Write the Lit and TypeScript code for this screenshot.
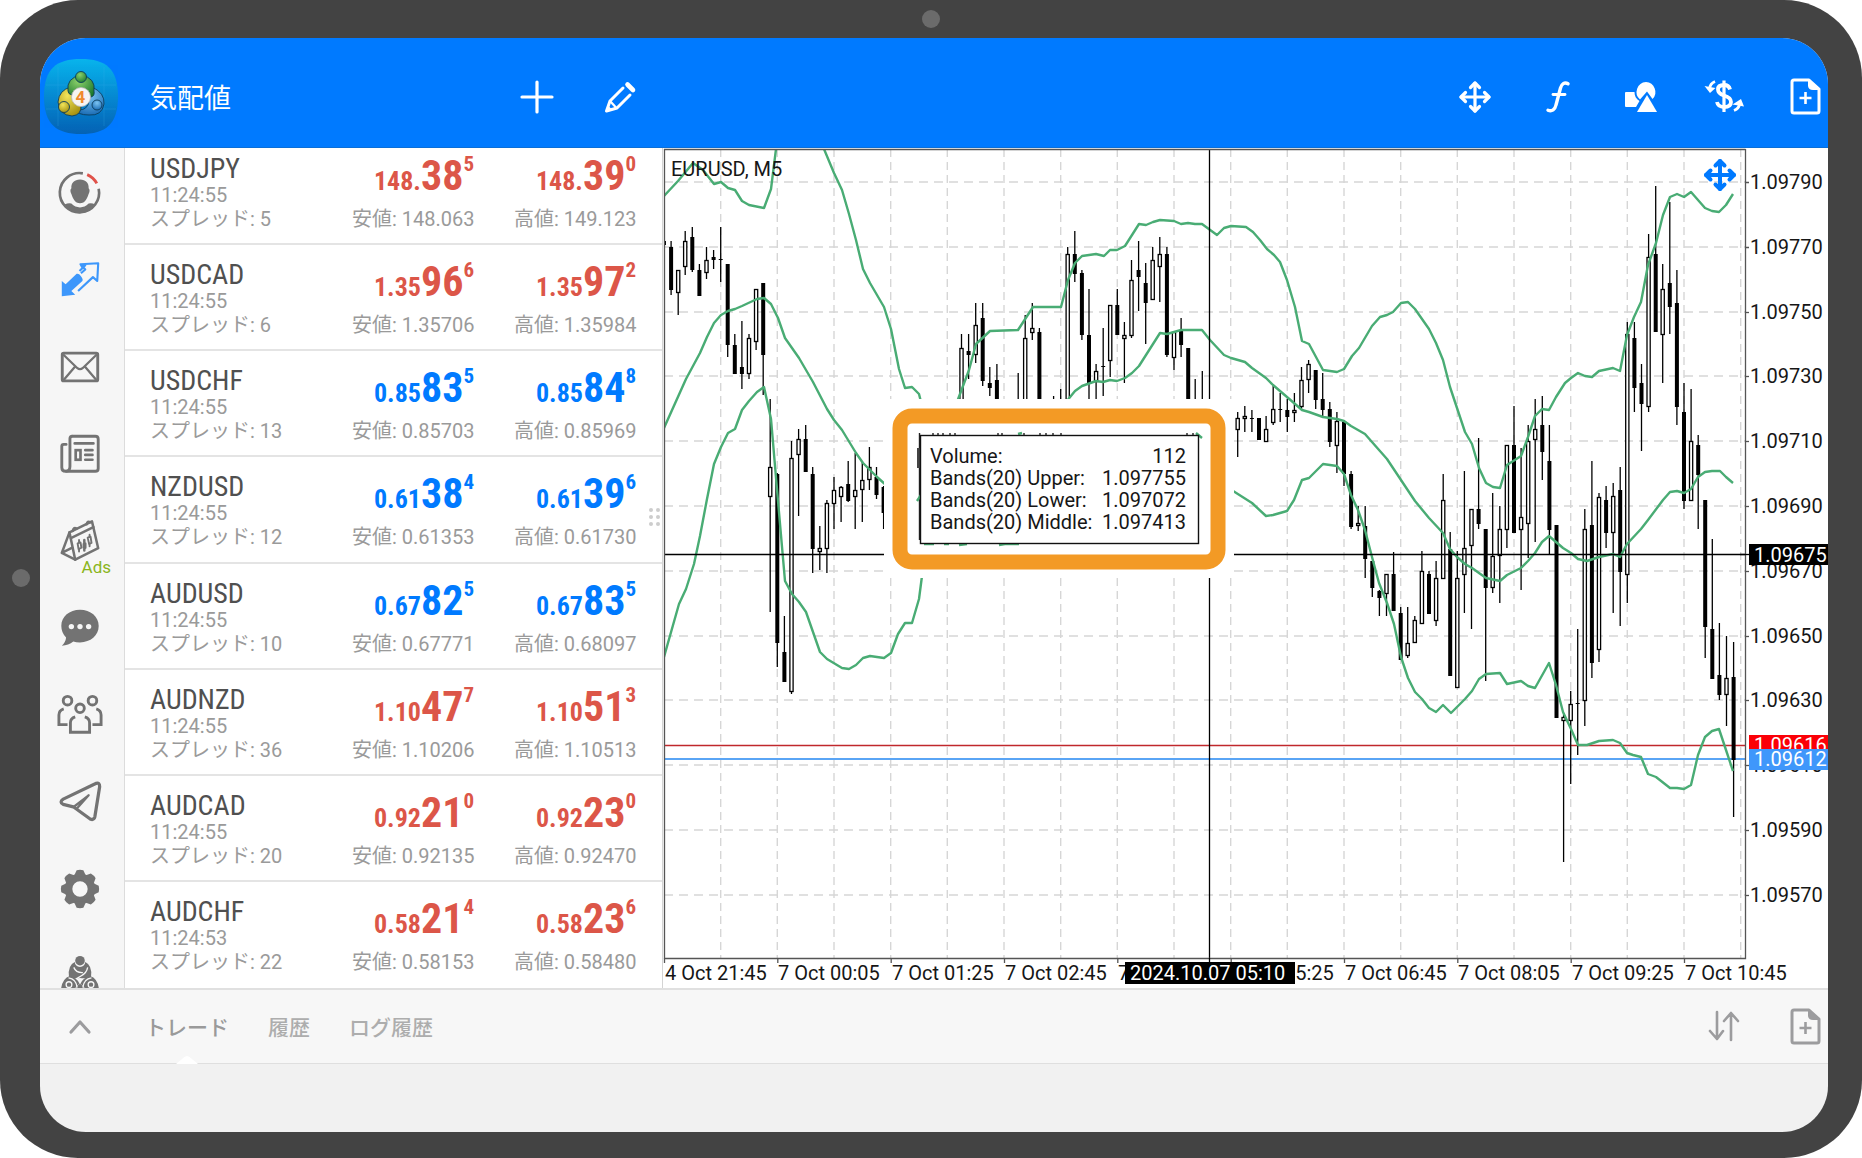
import { LitElement, html, svg, css } from "lit";
import { customElement, property } from "lit/decorators.js";

interface Quote {
  symbol: string;
  time: string;
  spread: number;
  bid: [string, string, string];
  ask: [string, string, string];
  low: string;
  high: string;
  up: boolean;
}

const QUOTES: Quote[] = [
  { symbol: "USDJPY", time: "11:24:55", spread: 5, bid: ["148.", "38", "5"], ask: ["148.", "39", "0"], low: "148.063", high: "149.123", up: false },
  { symbol: "USDCAD", time: "11:24:55", spread: 6, bid: ["1.35", "96", "6"], ask: ["1.35", "97", "2"], low: "1.35706", high: "1.35984", up: false },
  { symbol: "USDCHF", time: "11:24:55", spread: 13, bid: ["0.85", "83", "5"], ask: ["0.85", "84", "8"], low: "0.85703", high: "0.85969", up: true },
  { symbol: "NZDUSD", time: "11:24:55", spread: 12, bid: ["0.61", "38", "4"], ask: ["0.61", "39", "6"], low: "0.61353", high: "0.61730", up: true },
  { symbol: "AUDUSD", time: "11:24:55", spread: 10, bid: ["0.67", "82", "5"], ask: ["0.67", "83", "5"], low: "0.67771", high: "0.68097", up: true },
  { symbol: "AUDNZD", time: "11:24:55", spread: 36, bid: ["1.10", "47", "7"], ask: ["1.10", "51", "3"], low: "1.10206", high: "1.10513", up: false },
  { symbol: "AUDCAD", time: "11:24:55", spread: 20, bid: ["0.92", "21", "0"], ask: ["0.92", "23", "0"], low: "0.92135", high: "0.92470", up: false },
  { symbol: "AUDCHF", time: "11:24:53", spread: 22, bid: ["0.58", "21", "4"], ask: ["0.58", "23", "6"], low: "0.58153", high: "0.58480", up: false },
];

// Each candle: bar index, high, body top, body bottom, low, 1 = bearish (solid).
type Candle = [number, number, number, number, number, number];
const CANDLES: Candle[] = [
  [0, 225, 241, 245, 257, 1], [1, 241, 247, 290, 295, 1], [2, 270, 270, 293, 315, 0], [3, 231, 241, 267, 275, 0],
  [4, 227, 237, 270, 272, 1], [5, 264, 270, 296, 296, 1], [6, 247, 260, 273, 279, 0], [7, 250, 257, 260, 269, 1],
  [8, 227, 259, 260, 282, 1], [9, 264, 264, 345, 357, 1], [10, 334, 345, 374, 374, 1], [11, 321, 367, 374, 389, 1],
  [12, 334, 338, 374, 379, 0], [13, 289, 289, 342, 350, 0], [14, 283, 283, 355, 395, 1], [15, 399, 467, 497, 612, 0],
  [16, 473, 474, 643, 667, 1], [17, 616, 652, 682, 682, 1], [18, 441, 458, 692, 694, 0], [19, 429, 439, 455, 516, 0],
  [20, 425, 439, 472, 472, 1], [21, 467, 474, 549, 573, 1], [22, 526, 548, 552, 570, 0], [23, 500, 503, 549, 573, 0],
  [24, 477, 490, 504, 529, 0], [25, 486, 487, 497, 522, 0], [26, 461, 484, 501, 502, 1], [27, 453, 490, 497, 529, 0],
  [28, 462, 480, 490, 522, 0], [29, 447, 467, 480, 490, 0], [30, 467, 477, 495, 499, 1], [31, 486, 487, 513, 529, 1],
  [42, 334, 348, 410, 410, 0], [43, 334, 351, 355, 379, 1], [44, 303, 325, 355, 363, 0], [45, 303, 318, 381, 386, 1],
  [46, 367, 383, 388, 396, 1], [47, 364, 380, 410, 410, 1], [50, 373, 405, 410, 410, 1], [51, 315, 338, 410, 410, 0],
  [52, 303, 328, 333, 340, 0], [53, 328, 332, 410, 410, 1], [55, 396, 405, 410, 410, 1], [56, 389, 405, 410, 410, 1],
  [57, 247, 254, 410, 410, 0], [58, 231, 254, 274, 282, 1], [59, 270, 273, 335, 340, 1], [60, 289, 335, 383, 410, 1],
  [61, 364, 371, 382, 410, 0], [62, 328, 366, 367, 396, 1], [63, 305, 305, 361, 377, 0], [64, 289, 305, 335, 335, 1],
  [65, 322, 335, 339, 383, 0], [66, 260, 280, 336, 338, 0], [67, 241, 270, 277, 311, 1], [68, 263, 283, 303, 344, 1],
  [69, 247, 260, 300, 300, 0], [70, 237, 254, 267, 302, 0], [71, 247, 254, 355, 357, 1], [72, 332, 332, 358, 370, 0],
  [73, 318, 330, 345, 357, 1], [74, 348, 348, 410, 410, 1], [75, 379, 405, 410, 410, 1], [76, 371, 405, 410, 410, 1],
  [81, 412, 418, 430, 457, 0], [82, 406, 416, 419, 432, 0], [83, 410, 418, 419, 432, 1], [84, 418, 418, 440, 440, 1],
  [85, 416, 429, 442, 442, 0], [86, 386, 409, 423, 425, 0], [87, 393, 409, 410, 422, 1], [88, 399, 410, 417, 432, 1],
  [89, 393, 410, 413, 422, 0], [90, 367, 380, 407, 409, 0], [91, 360, 364, 380, 393, 0], [92, 370, 370, 400, 409, 1],
  [93, 373, 399, 410, 417, 1], [94, 402, 409, 442, 447, 1], [95, 412, 421, 446, 473, 0], [96, 421, 422, 474, 486, 1],
  [97, 471, 474, 527, 529, 1], [98, 506, 523, 526, 531, 0], [99, 506, 526, 559, 578, 1], [100, 561, 561, 588, 597, 1],
  [101, 590, 591, 598, 616, 1], [102, 574, 574, 594, 616, 0], [103, 552, 574, 611, 611, 1], [104, 607, 613, 660, 660, 1],
  [105, 607, 643, 656, 658, 0], [106, 616, 620, 643, 643, 0], [107, 551, 571, 624, 624, 0], [108, 571, 574, 614, 614, 1],
  [109, 561, 578, 621, 626, 0], [110, 474, 500, 579, 579, 0], [111, 532, 549, 676, 676, 1], [112, 551, 578, 688, 688, 0],
  [113, 471, 548, 575, 613, 0], [114, 509, 509, 546, 629, 0], [115, 438, 509, 524, 529, 1], [116, 529, 529, 588, 681, 1],
  [117, 493, 556, 588, 593, 0], [118, 506, 529, 556, 603, 0], [119, 445, 445, 530, 548, 0], [120, 406, 445, 533, 533, 1],
  [121, 448, 517, 530, 590, 0], [122, 425, 441, 524, 558, 0], [123, 399, 429, 440, 542, 0], [124, 396, 425, 452, 480, 1],
  [125, 425, 461, 530, 554, 1], [126, 525, 525, 718, 718, 1], [127, 713, 717, 721, 862, 0], [128, 691, 704, 721, 784, 0],
  [129, 629, 703, 704, 755, 1], [130, 509, 529, 701, 726, 0], [131, 461, 525, 663, 678, 1], [132, 493, 497, 650, 662, 0],
  [133, 486, 500, 533, 548, 1], [134, 483, 496, 533, 613, 0], [135, 467, 490, 572, 626, 1], [136, 322, 334, 575, 603, 0],
  [137, 322, 338, 388, 412, 1], [138, 364, 383, 404, 451, 1], [139, 234, 257, 407, 412, 0], [140, 186, 254, 332, 332, 1],
  [141, 264, 289, 335, 383, 0], [142, 202, 283, 307, 334, 1], [143, 270, 303, 407, 425, 1], [144, 383, 412, 501, 509, 1],
  [145, 389, 441, 501, 501, 0], [146, 435, 445, 475, 529, 1], [147, 500, 500, 627, 658, 1], [148, 539, 629, 679, 679, 1],
  [149, 623, 675, 695, 700, 1], [150, 636, 678, 695, 726, 0], [151, 642, 677, 760, 817, 1],
];

const BANDS: string[] = [
  // upper
  "664,196 678,181 693,163 703,170 714,184 721,182 728,188 735,190 742,201 749,205 764,208 771,189 776,149",
  "824,149 834,173 842,190 849,214 856,240 863,269 870,283 877,295 884,307 891,329 899,369 905,388 912,387 919,394 921,402",
  "957,402 969,370 976,344 990,331 1018,330 1033,307 1061,307 1068,280 1075,263 1082,256 1096,254 1104,256 1110,250 1117,250 1125,246 1139,224 1146,225 1153,222 1160,220 1174,221 1181,224 1188,223 1195,224 1202,224 1217,235 1224,228 1231,226 1246,227 1253,232 1260,240 1267,249 1274,255 1280,262 1287,280 1295,307 1302,341 1309,344 1323,370 1337,372 1344,369 1352,356 1359,348 1372,326 1380,317 1387,315 1393,312 1401,303 1408,302 1415,309 1429,329 1436,343 1443,360 1450,387 1465,432 1472,444 1479,468 1486,483 1493,487 1500,488 1507,465 1521,456 1528,437 1535,416 1542,409 1549,410 1556,397 1565,383 1571,378 1578,373 1585,376 1592,377 1599,371 1613,368 1620,371 1627,335 1634,317 1641,302 1648,265 1656,243 1663,215 1670,197 1677,194 1684,197 1691,192 1705,208 1712,211 1719,212 1726,205 1733,194",
  // middle
  "664,428 686,379 700,353 707,337 714,323 721,315 728,311 735,309 742,306 757,299 764,298 771,304 778,318 785,338 799,358 813,382 827,409 834,420 842,430 856,453 863,463 870,470 877,477 886,485",
  "1066,402 1075,391 1082,386 1096,381 1103,382 1110,380 1117,381 1125,378 1132,373 1139,366 1153,344 1160,333 1167,334 1181,330 1202,330 1210,340 1224,355 1231,358 1245,362 1252,368 1266,378 1273,385 1287,397 1302,410 1309,412 1323,417 1337,419 1344,421 1351,426 1365,434 1372,442 1387,459 1415,501 1429,518 1443,533 1450,549 1457,557 1465,564 1472,568 1486,578 1500,581 1507,575 1521,568 1528,561 1535,553 1542,542 1549,536 1563,548 1571,553 1578,559 1587,561 1599,557 1613,554 1620,557 1627,544 1641,529 1648,520 1663,500 1670,492 1677,491 1684,493 1691,489 1698,477 1705,472 1712,471 1720,471 1726,477 1733,483",
  // lower
  "664,657 679,604 686,589 694,564 700,536 707,499 714,464 721,447 728,433 735,429 742,410 749,401 757,392 764,387 771,419 778,501 785,581 792,594 799,602 806,612 820,652 827,659 842,668 849,669 856,665 863,658 870,656 884,658 891,653 898,634 905,623 912,623 919,599 922,576",
  "1230,489 1252,503 1266,516 1273,515 1280,513 1287,511 1294,500 1302,480 1309,478 1323,464 1337,466 1344,474 1351,495 1358,510 1365,530 1372,557 1379,583 1387,603 1394,624 1401,657 1408,678 1415,692 1422,699 1429,708 1436,712 1443,705 1451,713 1457,707 1465,699 1472,691 1479,679 1486,674 1500,673 1507,684 1521,681 1528,686 1535,688 1549,663 1556,685 1563,712 1571,729 1578,745 1587,745 1599,741 1613,740 1620,743 1627,753 1633,755 1641,757 1648,774 1656,777 1670,788 1677,788 1684,789 1691,785 1698,755 1705,737 1712,731 1719,729 1726,750 1733,771",
];

const PRICES = ["1.09790", "1.09770", "1.09750", "1.09730", "1.09710", "1.09690", "1.09670", "1.09650", "1.09630", "1.09610", "1.09590", "1.09570"];
const TIMES = ["4 Oct 21:45", "7 Oct 00:05", "7 Oct 01:25", "7 Oct 02:45", "7 Oct 04:05", "7 Oct 05:25", "7 Oct 06:45", "7 Oct 08:05", "7 Oct 09:25", "7 Oct 10:45"];

const READOUT: [string, string][] = [
  ["Volume:", "112"],
  ["Bands(20) Upper:", "1.097755"],
  ["Bands(20) Lower:", "1.097072"],
  ["Bands(20) Middle:", "1.097413"],
];

const barX = (i: number) => Math.round((664 + i * 7.0833) * 10) / 10;
const gridY = (i: number) => Math.round(182 + i * 64.8);

const moveIcon = (width: number) => svg`
  <g fill="none" stroke="currentColor" stroke-width=${width} stroke-linecap="round" stroke-linejoin="round">
    <path d="M16 2V30M2 16H30"/>
    <path d="M11.500 6.500L16 2L20.500 6.500M11.500 25.500L16 30L20.500 25.500M6.500 11.500L2 16L6.500 20.500M25.500 11.500L30 16L25.500 20.500"/>
  </g>`;

const docIcon = svg`
  <path d="M5 1H20L30 10V32Q30 34 28 34H5Q3 34 3 32V3Q3 1 5 1Z" fill="none" stroke="currentColor" stroke-width="3" stroke-linejoin="round"/>
  <path d="M19 1L31 11H24Q19.500 11 19 7Z" fill="currentColor"/>
  <path d="M16.500 13V25M10.500 19H22.500" stroke="currentColor" stroke-width="2.600"/>`;

const ICONS = {
  plus: svg`<path d="M16 1V31M1 16H31" stroke="currentColor" stroke-width="3.200" stroke-linecap="round"/>`,
  pencil: svg`
    <path d="M19 7L6 20L2.500 30L13 27L26 14" fill="none" stroke="currentColor" stroke-width="3" stroke-linejoin="round" stroke-linecap="round"/>
    <path d="M6 20L12.500 27" stroke="currentColor" stroke-width="2.200"/>
    <path d="M2 31L4 24.500L8.500 29Z" fill="currentColor"/>
    <path d="M23.500 3.500L29 9" stroke="currentColor" stroke-width="4.600" stroke-linecap="round"/>`,
  move: moveIcon(3.2),
  func: svg`
    <path d="M26 2.800C22.500 0.800 19.500 3 18.500 7L14 24C13 28.500 10 31 6 29.200" fill="none" stroke="currentColor" stroke-width="3.400" stroke-linecap="round"/>
    <path d="M11 13.500H23" stroke="currentColor" stroke-width="2.800" stroke-linecap="round"/>`,
  shapes: svg`
    <path d="M1 11H9.500C9.500 15 11 18 14.500 20L11 26H1Q0 26 0 25V12Q0 11 1 11Z" fill="currentColor"/>
    <path d="M21 1A10 10 0 0 1 27.500 18L22 10.500L15 18.500A10 10 0 0 1 21 1Z" fill="currentColor"/>
    <path d="M22 14L32 31H12Z" fill="currentColor"/>`,
  dollar: svg`
    <path d="M24 10.500Q23 6 18 6Q12 6 12 10.500Q12 14.500 18 16.500Q25 18.500 25 23Q25 28 18 28Q12 28 11 23" fill="none" stroke="currentColor" stroke-width="3.800"/>
    <path d="M18 1.500V33" stroke="currentColor" stroke-width="3.200"/>
    <path d="M9 2.500Q4 4.500 3.500 10" fill="none" stroke="currentColor" stroke-width="2.800"/>
    <path d="M-1.500 7L9.500 9L4 14Z" fill="currentColor"/>
    <path d="M28 31.500Q33 29.500 33.500 25" fill="none" stroke="currentColor" stroke-width="2.800"/>
    <path d="M26.500 25.500L35 20L38 27.500Z" fill="currentColor"/>`,
  doc: docIcon,
  sort: svg`
    <path d="M10 2V29M3 21L10 29L16 21M24 30V3M17 11L24 3L31 11" fill="none" stroke="currentColor" stroke-width="2.600" stroke-linecap="round" stroke-linejoin="round"/>`,
  up: svg`<path d="M7 21L16 11L25 21" fill="none" stroke="currentColor" stroke-width="3.200" stroke-linecap="round" stroke-linejoin="round"/>`,

  account: svg`
    <path d="M27 3.500A20.500 20.500 0 1 0 43.500 19.500" fill="none" stroke="currentColor" stroke-width="2.800"/>
    <path d="M31.500 4.800A20.500 20.500 0 0 1 41.500 14" fill="none" stroke="#e0524a" stroke-width="3"/>
    <path d="M24 10C30 10 33.500 14 33 19Q35 21 33 25Q31 31.500 27.500 34Q24 35.500 20.500 34Q17 31.500 15 25Q13 21 15 19C14.500 14 18 10 24 10Z" fill="currentColor"/>
    <path d="M8 36Q12 34 15 35Q19 39 24 39Q29 39 33 35Q36 34 40 36Q34 45 24 45Q14 45 8 36Z" fill="currentColor"/>`,
  trade: svg`
    <path d="M5 25L9 28.500L20.500 17.500Q23 17 25 20Q27.500 23 26.500 25L15 35.500L19 39.500L5 41Z" fill="currentColor"/>
    <path d="M23.500 14.500L29.500 8.500L26 10L24.500 7.500L43 6.500L42 25L37.500 21L22 35.500M24.500 7.500L29.500 13L25 17" fill="none" stroke="currentColor" stroke-width="2.200" stroke-linejoin="round"/>`,
  mail: svg`
    <rect x="5.500" y="9.500" width="37" height="29" rx="1.500" fill="none" stroke="currentColor" stroke-width="3"/>
    <path d="M6.500 11L21 25Q24 27.500 27 25L41.500 11M6.500 38L18.500 24M41.500 38L29.500 24" fill="none" stroke="currentColor" stroke-width="2.400"/>`,
  news: svg`
    <path d="M16 5.500H40Q43 5.500 43 8.500V39Q43 42 40 42H9Q5 42 5 38V16Q5 14 7 14H9.500" fill="none" stroke="currentColor" stroke-width="3" stroke-linecap="round"/>
    <path d="M16 5.500Q13.500 5.500 13.500 8V37Q13.500 42 9 42" fill="none" stroke="currentColor" stroke-width="3"/>
    <path d="M18.500 13H38M29.500 20H37M29.500 25H37M29.500 30H37" stroke="currentColor" stroke-width="2.800" stroke-linecap="round"/>
    <rect x="19.500" y="20" width="5" height="10" fill="none" stroke="currentColor" stroke-width="2.800"/>`,
  calendar: svg`
    <g fill="none" stroke="currentColor" stroke-width="2.600" stroke-linejoin="round" stroke-linecap="round">
      <path d="M13 15L36.500 3.500L43 31.500L19 43.500L13 15Z"/>
      <path d="M13 15L5 36.500L19 43.500M14.500 21L38 9.500M5 36.500L16 31"/>
      <path d="M16.500 13.500Q17 9 20.500 11M31 6.500Q31.500 2.500 35 4.500"/>
      <path d="M23 23V35M34 17.500V29.500" stroke-width="2"/>
      <path d="M21.500 26.500L24.500 25.500L25.500 31L22.500 32.500ZM32 20.500L35 19.500L36 26L33.500 27Z" fill="#f6f6f6" stroke-width="2"/>
      <path d="M28.500 23V34M28 27V31M29.500 26.500V31"/>
    </g>`,
  chat: svg`
    <path d="M24 5C35 5 43.500 12 43.500 22C43.500 32 35 39 24 39Q20 39 17 38Q12 42 5 42.500Q9 39 9.500 34Q4.500 29 4.500 22C4.500 12 13 5 24 5Z" fill="currentColor"/>
    <g fill="#f6f6f6"><circle cx="15" cy="22.500" r="2.800"/><circle cx="24" cy="22.500" r="2.800"/><circle cx="33" cy="22.500" r="2.800"/></g>`,
  community: svg`
    <g fill="none" stroke="currentColor" stroke-width="3">
      <circle cx="11" cy="9" r="4.500"/><circle cx="37" cy="9" r="4.500"/><circle cx="24" cy="17" r="4.500"/>
      <path d="M7 17.500Q2 19 2 24V34H11M41 17.500Q46 19 46 24V34H37"/>
      <path d="M19 26Q14 27.500 14 32V42H34V32Q34 27.500 29 26"/>
    </g>`,
  telegram: svg`
    <path d="M41 4.500L6.500 21Q2 24 6.500 26.500L17 29L35 42Q38.500 43 39.500 39.500L44.500 8Q44.500 3.500 41 4.500Z" fill="none" stroke="currentColor" stroke-width="3.400" stroke-linejoin="round"/>
    <path d="M17 29.500L33 17L20.500 31" fill="none" stroke="currentColor" stroke-width="2.400" stroke-linejoin="round"/>`,
  gear: svg`
    <circle cx="24" cy="24" r="12" fill="none" stroke="currentColor" stroke-width="8"/>
    <g fill="currentColor">
      ${[0, 45, 90, 135, 180, 225, 270, 315].map((a) => svg`<path d="M17.500 11L20.500 4.500Q24 3.500 27.500 4.500L30.500 11Z" transform="rotate(${a} 24 24)"/>`)}
    </g>`,
  strategy: svg`
    <g fill="currentColor">
      <circle cx="24" cy="8" r="5"/>
      <path d="M12.500 25Q11 13 18.500 9.500Q19 14.500 24 14.500Q29 14.500 29.500 9.500Q37 13 35.500 25Q30 27 24 26Q18 27 12.500 25Z"/>
      <path d="M4 42Q4 27 13.500 24Q21 26 23.500 32Q18 35 18 42ZM44 42Q44 27 34.500 24Q27 26 24.500 32Q30 35 30 42Z"/>
      <path d="M19 42Q20 33 24 32Q28 33 29 42Z"/>
    </g>
    <g fill="none" stroke="#f6f6f6" stroke-width="1.400">
      <path d="M17.500 15Q20 21 27 20.500M32 15Q31 21 25 24L20 27M12 26Q20 27 21 36M36 26Q28 27 27 36"/>
      <circle cx="12.500" cy="33" r="3"/><circle cx="35.500" cy="33" r="3"/>
    </g>`,
};

const NAV: { icon: keyof typeof ICONS; label: string; active?: boolean; badge?: string }[] = [
  { icon: "account", label: "口座" },
  { icon: "trade", label: "トレード", active: true },
  { icon: "mail", label: "メール" },
  { icon: "news", label: "ニュース" },
  { icon: "calendar", label: "カレンダー", badge: "Ads" },
  { icon: "chat", label: "チャット" },
  { icon: "community", label: "コミュニティ" },
  { icon: "telegram", label: "Telegram" },
  { icon: "gear", label: "設定" },
  { icon: "strategy", label: "MQL5" },
];

@customElement("quote-row")
export class QuoteRow extends LitElement {
  @property({ attribute: false }) quote!: Quote;

  static styles = css`
    :host {
      display: grid;
      grid-template-columns: 1fr 122px 122px;
      column-gap: 40px;
      box-sizing: border-box;
      min-height: 106px;
      padding: 16px 26px 0 25px;
      border-bottom: 2px solid #e4e4e4;
      font-size: 20px;
      line-height: 24px;
      color: #9a9a9a;
      white-space: nowrap;
    }
    :host(:last-of-type) {
      border-bottom: 0;
    }
    .symbol {
      font-family: "Roboto Condensed", "Liberation Sans Narrow", Roboto, sans-serif;
      font-size: 28px;
      line-height: 28px;
      color: #505050;
    }
    .side {
      text-align: right;
    }
    .price {
      display: flex;
      justify-content: flex-end;
      align-items: baseline;
      height: 52px;
      font-family: "Roboto Condensed", "Liberation Sans Narrow", Roboto, sans-serif;
      font-weight: 700;
      font-size: 26px;
      line-height: 42px;
      color: #dc5648;
    }
    .price.up {
      color: #007aff;
    }
    .big {
      font-size: 42px;
    }
    .pip {
      align-self: flex-start;
      font-size: 21px;
      line-height: 18px;
    }
  `;

  private price([a, b, c]: [string, string, string]) {
    return html`<div class="price ${this.quote.up ? "up" : ""}"><span>${a}</span><span class="big">${b}</span><span class="pip">${c}</span></div>`;
  }

  render() {
    const q = this.quote;
    return html`
      <div>
        <div class="symbol">${q.symbol}</div>
        <div>${q.time}</div>
        <div>スプレッド: ${q.spread}</div>
      </div>
      <div class="side">${this.price(q.bid)}<div>安値: ${q.low}</div></div>
      <div class="side">${this.price(q.ask)}<div>高値: ${q.high}</div></div>
    `;
  }
}

@customElement("price-chart")
export class PriceChart extends LitElement {
  static styles = css`
    :host {
      display: block;
      background: #fff;
    }
    .chart {
      display: block;
      width: 100%;
      height: auto;
      font-family: Roboto, sans-serif;
      font-size: 20px;
      fill: #161616;
    }
    .grid {
      stroke: #d6d6d6;
      stroke-width: 1.4;
      fill: none;
    }
    .band {
      fill: none;
      stroke: #49ac74;
      stroke-width: 2.4;
      stroke-linejoin: round;
    }
    .wick {
      stroke: #000;
      stroke-width: 1.3;
    }
    .bull {
      fill: #fff;
      stroke: #000;
      stroke-width: 1.3;
    }
    .bear {
      fill: #000;
    }
    .frame {
      fill: none;
      stroke: #555;
      stroke-width: 1.3;
    }
    .cross {
      stroke: #000;
      stroke-width: 1.3;
    }
    .tag {
      fill: #fff;
    }
    .move {
      color: #007aff;
    }
  `;

  private candle([i, hi, top, bottom, lo, solid]: Candle) {
    const x = barX(i);
    return svg`
      <path class="wick" d="M${x} ${hi}V${lo}"/>
      ${solid
        ? svg`<rect class="bear" x=${x - 2} y=${top} width="4" height=${bottom - top}/>`
        : svg`<rect class="bull" x=${x - 1.6} y=${top + 0.5} width="3.2" height=${Math.max(bottom - top - 1, 1)}/>`}`;
  }

  render() {
    return html`
      <svg class="chart" viewBox="663 148 1165 840" role="img" aria-label="EURUSD, M5">
        <defs><clipPath id="plot"><rect x="664" y="149" width="1082" height="810"/></clipPath></defs>
        ${Array.from({ length: 19 }, (_, k) => svg`<path class="grid" stroke-dasharray="8 5" d="M${barX(8 + k * 8)} 149V958"/>`)}
        ${PRICES.map((_, k) => svg`<path class="grid" stroke-dasharray="9 6" d="M664 ${gridY(k)}H1745"/>`)}
        <g clip-path="url(#plot)">
          <path d="M664 745.500H1745" stroke="#c0282c" stroke-width="1.500"/>
          <path d="M664 759H1745" stroke="#5aa5f5" stroke-width="1.800"/>
          ${CANDLES.map((c) => this.candle(c))}
          ${BANDS.map((points) => svg`<polyline class="band" points=${points}/>`)}
          <path class="cross" d="M664 554.500H1745M1209.500 149V959"/>
        </g>
        <path class="frame" d="M664.500 958.500V149.500H1745.500M1745.500 149V958.500H664"/>
        <text x="671" y="176">EURUSD, M5</text>
        <g class="move" transform="translate(1704 159)">${moveIcon(4)}</g>

        <g>
          <rect x="884" y="399" width="350" height="179" fill="#fff"/>
          <rect x="900" y="416" width="318" height="146" rx="12" fill="#fff" stroke="#f39a25" stroke-width="15"/>
          <path d="M919.500 433V540M933 433V437M938 433V437M943 433V437M950 433V437M955 433V437M998 433V437M1002 433V437M1024 433V437M1040 433V437M1046 433V437M1053 433V437M1061 433V437M1187 433V437M1193 433V437M1197 433V437" stroke="#222" stroke-width="1.400"/>
          <rect x="917" y="448" width="3" height="20" fill="#444"/>
          <path class="band" d="M917 501L921 495M1018 434L1022 433M1196 433L1202 438M924 544H934M944 544H949M959 545L967 544M999 545L1005 544H1019"/>
          <rect x="920.500" y="435.500" width="278" height="108" fill="#fff" stroke="#111" stroke-width="1.400"/>
          ${READOUT.map(([label, value], k) => svg`
            <text x="930" y=${463 + k * 22}>${label}</text>
            <text x="1186" y=${463 + k * 22} text-anchor="end">${value}</text>`)}
        </g>

        ${PRICES.map((p, k) => svg`
          <path class="frame" d="M1745 ${gridY(k) + 0.5}H1749"/>
          <text x="1750" y=${gridY(k) + 7}>${p}</text>`)}
        <rect x="1749" y="544" width="79" height="21" fill="#000"/>
        <text class="tag" x="1754" y="562">1.09675</text>
        <path class="cross" d="M1740 554.500H1751"/>
        <rect x="1749" y="735" width="79" height="21" fill="#fb0007"/>
        <text class="tag" x="1754" y="752">1.09616</text>
        <rect x="1749" y="749" width="79" height="21" fill="#3f97fb"/>
        <text class="tag" x="1754" y="766">1.09612</text>

        ${TIMES.map((t, k) => svg`
          <path class="frame" d="M${barX(k * 16) + 0.5} 958V963"/>
          <text x=${Math.round(barX(k * 16)) + 1} y="980">${t}</text>`)}
        <rect x="1125" y="962" width="170" height="22" fill="#000"/>
        <text class="tag" x="1130" y="980">2024.10.07 05:10</text>
        <path class="cross" d="M1209.500 958V963"/>
      </svg>
    `;
  }
}

@customElement("app-root")
export class AppRoot extends LitElement {
  static styles = css`
    :host {
      display: block;
      min-height: 100vh;
      background: #fff;
      font-family: Roboto, "Noto Sans CJK JP", sans-serif;
    }
    * {
      box-sizing: border-box;
    }
    button {
      display: flex;
      align-items: center;
      justify-content: center;
      padding: 0;
      border: 0;
      background: none;
      color: inherit;
      font: inherit;
    }
    .icon {
      display: block;
      overflow: visible;
      flex: none;
    }
    .device {
      position: relative;
      display: flex;
      height: 100vh;
      min-height: 720px;
      padding: 38px 34px 26px 40px;
      border-radius: 78px;
      background: #434343;
    }
    .lens {
      position: absolute;
      width: 18px;
      height: 18px;
      border-radius: 50%;
      background: #6b6b6b;
    }
    .lens.top {
      top: 10px;
      left: 50%;
      margin-left: -9px;
    }
    .lens.side {
      top: 50%;
      left: 12px;
      margin-top: -10px;
    }
    .screen {
      display: flex;
      flex-direction: column;
      flex: 1;
      min-width: 0;
      border-radius: 46px;
      overflow: hidden;
      background: #f1f1f1;
    }
    .top-bar {
      display: flex;
      align-items: center;
      flex: none;
      height: 110px;
      padding: 8px 4px 0 4px;
      background: #007aff;
      border-bottom: 1px solid #0a6fd8;
      color: #fff;
    }
    .title {
      flex: none;
      width: 345px;
      margin: 0 0 0 32px;
      padding-top: 4px;
      font-size: 27px;
      line-height: 40px;
      font-weight: 400;
    }
    .tool {
      width: 83px;
      height: 64px;
    }
    .spacer {
      flex: 1;
    }
    .tool.last {
      width: 36px;
      margin-left: 23px;
    }
    .main {
      display: flex;
      flex: 1;
      min-height: 0;
      overflow: hidden;
      background: #fff;
    }
    .side-nav {
      flex: none;
      width: 85px;
      padding-top: 1px;
      overflow: hidden;
      background: #f6f6f6;
      border-right: 1px solid #dcdcdc;
      color: #737373;
    }
    .nav-item {
      position: relative;
      width: 80px;
      height: 87px;
    }
    .nav-item.active {
      color: #3d97fb;
    }
    .badge {
      position: absolute;
      right: 9px;
      bottom: 7px;
      font-size: 17px;
      line-height: 20px;
      color: #8ab51c;
    }
    .quotes {
      position: relative;
      display: grid;
      grid-auto-rows: 1fr;
      flex: none;
      width: 538px;
      margin-top: -9px;
      border-right: 1px solid #d4d4d4;
    }
    .grip {
      position: absolute;
      right: 1px;
      top: 369px;
      display: grid;
      grid-template-columns: 4px 4px;
      gap: 3px;
      width: 12px;
    }
    .dot {
      height: 4px;
      border-radius: 50%;
      background: #cdcdcd;
    }
    .chart {
      flex: 1;
      min-width: 0;
    }
    .bottom-bar {
      display: flex;
      align-items: stretch;
      flex: none;
      height: 76px;
      padding: 0 4px 0 0;
      background: #f7f7f7;
      border-top: 2px solid #e0e0e0;
      border-bottom: 1px solid #dfdfdf;
      color: #9c9c9e;
    }
    .expand {
      width: 80px;
    }
    .tabs {
      display: flex;
      gap: 39px;
      margin-left: 25px;
      font-size: 21px;
      font-weight: 500;
      color: #adadad;
    }
    .tab {
      position: relative;
      padding-bottom: 2px;
    }
    .tab.active {
      color: #9a9a9a;
    }
    .tab.active::after {
      content: "";
      position: absolute;
      bottom: -1px;
      left: 50%;
      width: 22px;
      height: 8px;
      margin-left: -11px;
      background: #fff;
      clip-path: polygon(0 100%, 40% 10%, 50% 0, 60% 10%, 100% 100%);
    }
    .bottom-bar .tool {
      height: auto;
    }
    .panel {
      flex: none;
      height: 68px;
    }
  `;

  private icon(name: keyof typeof ICONS, size: number, box = 32) {
    return html`<svg class="icon" width=${size} height=${size} viewBox="0 0 ${box} ${box}" aria-hidden="true">${ICONS[name]}</svg>`;
  }

  private logo() {
    return html`
      <svg class="icon" width="74" height="75" viewBox="0 0 74 75" aria-hidden="true">
        <defs>
          <linearGradient id="sky" x1="0" y1="0" x2="0" y2="1">
            <stop offset="0" stop-color="#08b4ec"/><stop offset="0.550" stop-color="#0685cf"/><stop offset="1" stop-color="#0462b4"/>
          </linearGradient>
          <radialGradient id="green" cx="0.400" cy="0.300" r="0.800"><stop offset="0" stop-color="#8bd06a"/><stop offset="1" stop-color="#17752a"/></radialGradient>
          <radialGradient id="yellow" cx="0.400" cy="0.300" r="0.800"><stop offset="0" stop-color="#f1e45a"/><stop offset="1" stop-color="#a08a0a"/></radialGradient>
          <radialGradient id="blue" cx="0.500" cy="0.300" r="0.800"><stop offset="0" stop-color="#7cc4f2"/><stop offset="1" stop-color="#0f62ae"/></radialGradient>
        </defs>
        <path d="M37 0C62 0 74 10 74 37.500C74 65 62 75 37 75C12 75 0 65 0 37.500C0 10 12 0 37 0Z" fill="url(#sky)"/>
        <path d="M2 26H72M2 50H72M14 8V67M60 8V67" stroke="#3fb4ea" stroke-width="0.600" opacity="0.350"/>
        <g stroke="#0b3d5c" stroke-width="0.900">
          <path d="M48 28Q61 34 60 45Q58 57 45 56Q33 56 31 50Q40 53 44 46Z" fill="url(#blue)"/>
          <path d="M27 28Q15 31 14 43Q15 56 28 57Q38 56 37 46L30 40Z" fill="url(#yellow)"/>
          <path d="M24 32Q22 19 37 16Q52 19 50 32Q51 37 47 38L28 36Q24 35 24 32Z" fill="url(#green)"/>
          <circle cx="37" cy="18" r="5.500" fill="url(#green)"/>
          <circle cx="20" cy="48" r="5.500" fill="url(#yellow)"/>
          <circle cx="53" cy="46" r="5" fill="url(#blue)"/>
        </g>
        <circle cx="37" cy="38" r="9.500" fill="#f6f4f2" stroke="#b8b8b8" stroke-width="0.800"/>
        <text x="36.500" y="44" text-anchor="middle" font-family="Roboto, sans-serif" font-size="17" font-weight="700" fill="#f08a2c">4</text>
      </svg>`;
  }

  private tool(name: keyof typeof ICONS, label: string, size = 32, box = 32, extra = "") {
    return html`<button class="tool ${extra}" type="button" aria-label=${label}>${this.icon(name, size, box)}</button>`;
  }

  render() {
    return html`
      <div class="device">
        <span class="lens top"></span>
        <span class="lens side"></span>
        <div class="screen">
          <header class="top-bar">
            ${this.logo()}
            <h1 class="title">気配値</h1>
            ${this.tool("plus", "追加")}
            ${this.tool("pencil", "編集")}
            <span class="spacer"></span>
            ${this.tool("move", "十字線")}
            ${this.tool("func", "インディケータ")}
            ${this.tool("shapes", "オブジェクト")}
            ${this.tool("dollar", "シンボル", 36, 36)}
            ${this.tool("doc", "新規注文", 35, 35, "last")}
          </header>
          <main class="main">
            <nav class="side-nav">
              ${NAV.map((n) => html`
                <button class="nav-item ${n.active ? "active" : ""}" type="button" aria-label=${n.label}>
                  ${this.icon(n.icon, 46, 48)}
                  ${n.badge ? html`<span class="badge">${n.badge}</span>` : null}
                </button>`)}
            </nav>
            <section class="quotes" aria-label="気配値">
              ${QUOTES.map((q) => html`<quote-row .quote=${q}></quote-row>`)}
              <div class="grip">${[0, 1, 2, 3, 4, 5].map(() => html`<span class="dot"></span>`)}</div>
            </section>
            <price-chart class="chart"></price-chart>
          </main>
          <footer class="bottom-bar">
            <button class="expand" type="button" aria-label="展開">${this.icon("up", 32)}</button>
            <div class="tabs">
              <button class="tab active" type="button">トレード</button>
              <button class="tab" type="button">履歴</button>
              <button class="tab" type="button">ログ履歴</button>
            </div>
            <span class="spacer"></span>
            ${this.tool("sort", "並べ替え", 34, 34)}
            ${this.tool("doc", "新規注文", 35, 35, "last")}
          </footer>
          <div class="panel"></div>
        </div>
      </div>
    `;
  }
}
